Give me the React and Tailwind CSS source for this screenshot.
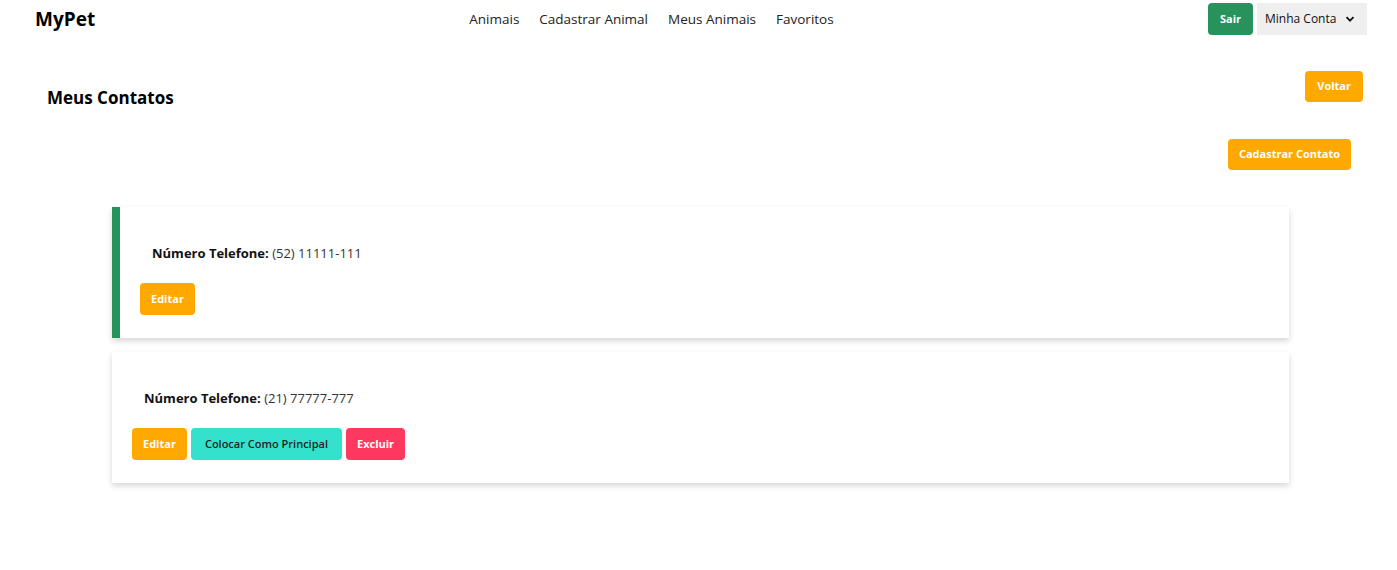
import React from "react";

const font = { fontFamily: '"Open Sans", "Noto Sans", sans-serif' };

function ContactCard({ phone, principal }) {
    return (
        <div
            className={
                "bg-white shadow-[0_3px_6px_rgba(0,0,0,0.16)] h-[131px] flex flex-col pl-5 pt-[36px] " +
                (principal ? "border-l-8 border-[#27925c]" : "")
            }
        >
            <p className="text-[13px] text-[#333] pl-3 leading-5">
                <span className="font-bold text-[#111]">Número Telefone:</span> {phone}
            </p>
            <div className="flex gap-1 mt-[20px]">
                <button className="h-8 px-[11px] rounded bg-[#ffa800] text-white text-[11px] font-bold">Editar</button>
                {!principal && (
                    <>
                        <button className="h-8 px-[14px] rounded bg-[#33e2cc] text-[#222] text-[11px] font-semibold">
                            Colocar Como Principal
                        </button>
                        <button className="h-8 px-[11px] rounded bg-[#ff3860] text-white text-[11px] font-bold">Excluir</button>
                    </>
                )}
            </div>
        </div>
    );
}

export default function App() {
    return (
        <div className="min-h-[570px] bg-white text-black" style={font}>
            {/* navbar */}
            <header className="h-[38px] flex items-center pl-[35px] pr-[30px]">
                <div className="text-[19px] font-bold w-[200px]">MyPet</div>
                <nav className="flex-1 flex justify-center gap-5 text-[13.5px] text-[#222] pr-[140px]">
                    <a>Animais</a>
                    <a>Cadastrar Animal</a>
                    <a>Meus Animais</a>
                    <a>Favoritos</a>
                </nav>
                <div className="flex gap-1 items-center">
                    <button className="h-8 px-3 rounded bg-[#27925c] text-white text-[11px] font-bold">Sair</button>
                    <button className="h-8 w-[110px] bg-[#efefef] text-[#111] text-[12px] flex items-center justify-between pl-2 pr-3">
                        Minha Conta
                        <svg width="10" height="10" viewBox="0 0 10 10" fill="none" stroke="#111" strokeWidth="1.8">
                            <path d="M1.5 3.2 5 6.7 8.5 3.2" />
                        </svg>
                    </button>
                </div>
            </header>

            {/* title row */}
            <div className="flex justify-between items-start pl-[47px] pr-[34px] mt-[33px]">
                <h1 className="text-[17px] leading-6 font-bold mt-[15px]">Meus Contatos</h1>
                <button className="h-[31px] px-3 rounded bg-[#ffa800] text-white text-[11px] font-bold">Voltar</button>
            </div>

            <div className="flex justify-end pr-[46px] mt-[29px]">
                <button className="h-[31px] px-[11px] rounded bg-[#ffa800] text-white text-[11px] font-bold">
                    Cadastrar Contato
                </button>
            </div>

            <div className="flex flex-col gap-[14px] ml-[112px] w-[1177px] mt-[37px]">
                <ContactCard phone="(52) 11111-111" principal />
                <ContactCard phone="(21) 77777-777" />
            </div>
        </div>
    );
}
